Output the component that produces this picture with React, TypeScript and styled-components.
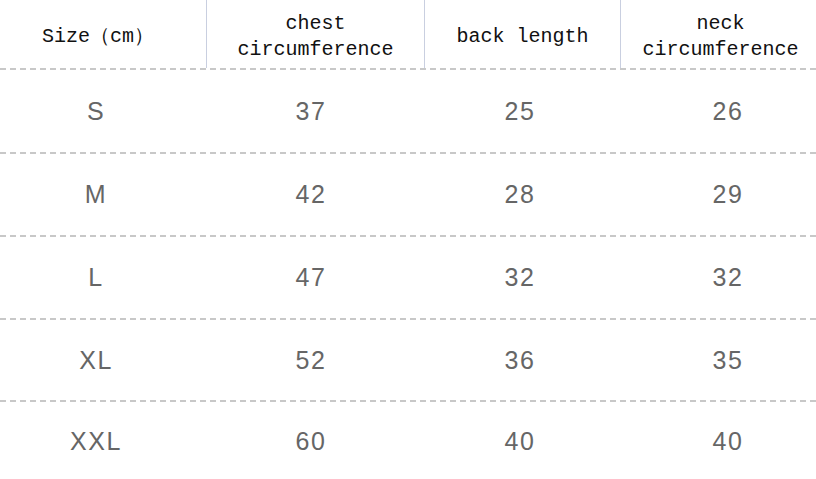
import React, { FC } from "react";
import styled, { createGlobalStyle } from "styled-components";

const GlobalStyle = createGlobalStyle`
  html, body {
    margin: 0;
    padding: 0;
    background: #ffffff;
  }
`;

const HEADER_COLUMNS = "206px 218px 196px 196px";

const Page = styled.div`
  width: 816px;
  height: 479px;
  overflow: hidden;
  background: #ffffff;
  display: flex;
  flex-direction: column;
`;

const HeaderRow = styled.div`
  display: grid;
  grid-template-columns: ${HEADER_COLUMNS};
  height: 68px;
  flex: 0 0 auto;
`;

const HeaderCell = styled.div<{ $divider: boolean; $shift: number }>`
  display: flex;
  align-items: center;
  justify-content: center;
  text-align: center;
  padding-top: 6px;
  padding-left: ${({ $shift }) => ($shift > 0 ? $shift * 2 : 0)}px;
  padding-right: ${({ $shift }) => ($shift < 0 ? -$shift * 2 : 0)}px;
  box-sizing: border-box;
  border-left: ${({ $divider }) => ($divider ? "1px solid #c9cfe0" : "none")};
  font-family: "Liberation Mono", "DejaVu Sans Mono", monospace;
  font-size: 20px;
  line-height: 26px;
  color: #111111;
  white-space: pre-line;
`;

const DashLine = styled.div`
  height: 2px;
  flex: 0 0 auto;
  background: repeating-linear-gradient(
    to right,
    #c8c8c8 0 6px,
    transparent 6px 10px
  );
`;

const BodyRow = styled.div<{ $height: number }>`
  display: grid;
  grid-template-columns: ${HEADER_COLUMNS};
  height: ${({ $height }) => $height}px;
  flex: 0 0 auto;
`;

const DataCell = styled.div<{ $shift: number }>`
  display: flex;
  align-items: center;
  justify-content: center;
  box-sizing: border-box;
  padding-left: ${({ $shift }) => ($shift > 0 ? $shift * 2 : 0)}px;
  padding-right: ${({ $shift }) => ($shift < 0 ? -$shift * 2 : 0)}px;
  font-family: "Liberation Sans", Arial, sans-serif;
  font-size: 25px;
  font-weight: 400;
  letter-spacing: 1.5px;
  color: #666666;
`;

const headers = [
  { label: "Size（cm）", shift: -5 },
  { label: "chest\ncircumference", shift: 0 },
  { label: "back length", shift: 0 },
  { label: "neck\ncircumference", shift: 2 },
];

const dataShifts = [-7, -4, -2, 10];

const rows = [
  { size: "S", values: ["37", "25", "26"], height: 82 },
  { size: "M", values: ["42", "28", "29"], height: 81 },
  { size: "L", values: ["47", "32", "32"], height: 81 },
  { size: "XL", values: ["52", "36", "35"], height: 80 },
  { size: "XXL", values: ["60", "40", "40"], height: 79 },
];

const SizeTable: FC = () => {
  return (
    <Page>
      <HeaderRow>
        {headers.map((h, i) => (
          <HeaderCell key={h.label} $divider={i > 0} $shift={h.shift}>
            {h.label}
          </HeaderCell>
        ))}
      </HeaderRow>
      <DashLine />

      {rows.map((row, r) => (
        <React.Fragment key={row.size}>
          <BodyRow $height={row.height}>
            {[row.size, ...row.values].map((v, i) => (
              <DataCell key={i} $shift={dataShifts[i]}>
                {v}
              </DataCell>
            ))}
          </BodyRow>
          {r < rows.length - 1 && <DashLine />}
        </React.Fragment>
      ))}
    </Page>
  );
};

export default function App() {
  return (
    <>
      <GlobalStyle />
      <SizeTable />
    </>
  );
}
